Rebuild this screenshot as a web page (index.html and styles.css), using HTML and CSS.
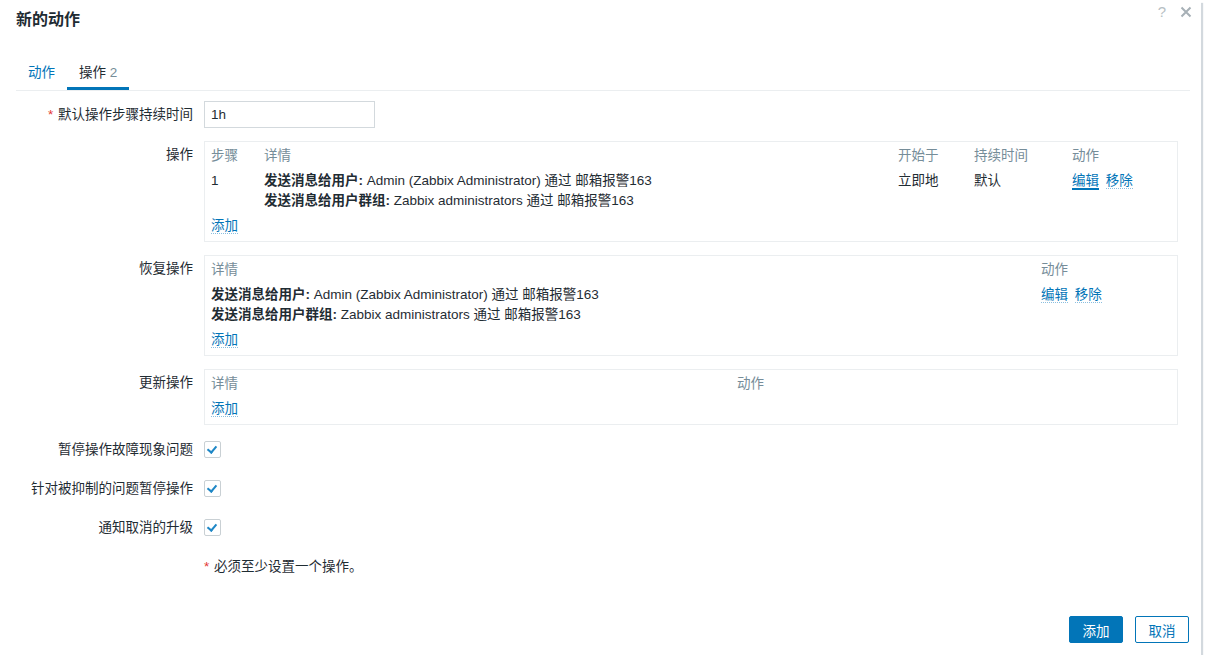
FILE: index.html
```html
<!DOCTYPE html>
<html lang="zh">

<head>
    <meta charset="UTF-8">
    <title>新的动作</title>
    <link rel="stylesheet" href="styles.css">
</head>

<body>
    <div class="dialogue">
        <div class="dialogue-head">
            <h4>新的动作</h4>
            <div class="head-tools">
                <span class="btn-help">?</span>
                <svg class="btn-close" width="12" height="12" viewBox="0 0 12 12">
                    <path d="M1.5 1.5 L10.5 10.5 M10.5 1.5 L1.5 10.5" stroke="#a7b0b6" stroke-width="2" fill="none" />
                </svg>
            </div>
        </div>

        <ul class="tabs">
            <li class="tab"><a href="#">动作</a></li>
            <li class="tab active"><a href="#">操作 <span class="count">2</span></a></li>
        </ul>

        <div class="form">
            <div class="form-row">
                <label class="form-label"><span class="required">*</span> 默认操作步骤持续时间</label>
                <div class="form-field">
                    <input type="text" class="text-input" value="1h">
                </div>
            </div>

            <div class="form-row">
                <label class="form-label">操作</label>
                <div class="form-field">
                    <div class="table-box">
                        <table class="list">
                            <colgroup>
                                <col style="width: 53px">
                                <col style="width: 634px">
                                <col style="width: 76px">
                                <col style="width: 98px">
                                <col>
                            </colgroup>
                            <tr>
                                <th>步骤</th>
                                <th>详情</th>
                                <th>开始于</th>
                                <th>持续时间</th>
                                <th>动作</th>
                            </tr>
                            <tr>
                                <td>1</td>
                                <td>
                                    <b>发送消息给用户:</b> Admin (Zabbix Administrator) 通过 邮箱报警163<br>
                                    <b>发送消息给用户群组:</b> Zabbix administrators 通过 邮箱报警163
                                </td>
                                <td>立即地</td>
                                <td>默认</td>
                                <td><a href="#" class="link focus">编辑</a> <a href="#" class="link">移除</a></td>
                            </tr>
                            <tr>
                                <td colspan="5" class="add-cell"><a href="#" class="link">添加</a></td>
                            </tr>
                        </table>
                    </div>
                </div>
            </div>

            <div class="form-row">
                <label class="form-label">恢复操作</label>
                <div class="form-field">
                    <div class="table-box">
                        <table class="list">
                            <colgroup>
                                <col style="width: 830px">
                                <col>
                            </colgroup>
                            <tr>
                                <th>详情</th>
                                <th>动作</th>
                            </tr>
                            <tr>
                                <td>
                                    <b>发送消息给用户:</b> Admin (Zabbix Administrator) 通过 邮箱报警163<br>
                                    <b>发送消息给用户群组:</b> Zabbix administrators 通过 邮箱报警163
                                </td>
                                <td><a href="#" class="link">编辑</a> <a href="#" class="link">移除</a></td>
                            </tr>
                            <tr>
                                <td colspan="2" class="add-cell"><a href="#" class="link">添加</a></td>
                            </tr>
                        </table>
                    </div>
                </div>
            </div>

            <div class="form-row">
                <label class="form-label">更新操作</label>
                <div class="form-field">
                    <div class="table-box">
                        <table class="list">
                            <colgroup>
                                <col style="width: 526px">
                                <col>
                            </colgroup>
                            <tr>
                                <th>详情</th>
                                <th>动作</th>
                            </tr>
                            <tr>
                                <td colspan="2" class="add-cell"><a href="#" class="link">添加</a></td>
                            </tr>
                        </table>
                    </div>
                </div>
            </div>

            <div class="form-row check-row first-check">
                <label class="form-label">暂停操作故障现象问题</label>
                <div class="form-field"><span class="checkbox checked"></span></div>
            </div>
            <div class="form-row check-row">
                <label class="form-label">针对被抑制的问题暂停操作</label>
                <div class="form-field"><span class="checkbox checked"></span></div>
            </div>
            <div class="form-row check-row">
                <label class="form-label">通知取消的升级</label>
                <div class="form-field"><span class="checkbox checked"></span></div>
            </div>

            <div class="form-row note-row">
                <label class="form-label"></label>
                <div class="form-field"><span class="required">*</span> 必须至少设置一个操作。</div>
            </div>
        </div>

        <div class="dialogue-foot">
            <button class="btn-primary">添加</button>
            <button class="btn-alt">取消</button>
        </div>
    </div>
</body>

</html>
```

FILE: styles.css
```css
body {
    margin: 0;
    background-color: #fff;
    font-family: "Liberation Sans", Arial, "Noto Sans CJK SC", sans-serif;
    font-size: 13.5px;
    color: #1f2c33;
}

.dialogue {
    display: flex;
    flex-direction: column;
    width: 1201px;
    height: 655px;
    background: #fff;
    box-shadow: 2px 3px 1px #d3d9de;
}

.dialogue-head {
    display: flex;
    justify-content: space-between;
    padding: 10px 16px 0;
}

.dialogue-head h4 {
    margin: 0;
    font-size: 16px;
    line-height: 20px;
    font-weight: bold;
    color: #1f2c33;
}

.head-tools {
    display: flex;
    align-items: flex-start;
    margin-top: -8px;
    margin-right: -7px;
}

.btn-help {
    font-size: 15px;
    line-height: 20px;
    color: #b7bfc4;
    margin-right: 14px;
}

.btn-close {
    margin-top: 4px;
}

.tabs {
    display: flex;
    list-style: none;
    margin: 25px 11px 0 16px;
    padding: 0;
    border-bottom: 1px solid #ebeef0;
}

.tab {
    padding: 7px 12px 4px;
    line-height: 21px;
    border-bottom: 3px solid transparent;
}

.tab a {
    color: #0275b8;
    text-decoration: none;
}

.tab.active {
    border-bottom-color: #0275b8;
}

.tab.active a {
    color: #1f2c33;
}

.count {
    color: #768d99;
}

.form {
    padding: 10px 0 0 16px;
}

.form-row {
    display: flex;
    margin-bottom: 13px;
}

.form-label {
    width: 177px;
    flex: none;
    text-align: right;
    line-height: 27px;
    padding-right: 11px;
}

.required {
    color: #e33734;
    margin-right: 1px;
}

.text-input {
    box-sizing: border-box;
    width: 171px;
    height: 27px;
    border: 1px solid #d3d9dd;
    padding: 0 6px;
    font-family: inherit;
    font-size: 13.5px;
    color: #1f2c33;
}

.table-box {
    box-sizing: border-box;
    width: 974px;
    border: 1px solid #ebeef0;
}

.list {
    width: 100%;
    table-layout: fixed;
    border-collapse: collapse;
}

.list th {
    text-align: left;
    font-weight: normal;
    color: #768d99;
    line-height: 20px;
    padding: 4px 6px 2px;
}

.list td {
    line-height: 20px;
    padding: 3px 6px 2px;
    vertical-align: top;
}

.list td.add-cell {
    padding: 3px 6px 5px;
}

.link {
    color: #0275b8;
    text-decoration: none;
    border-bottom: 1px dotted #8cbfdf;
    margin-right: 3px;
}

.link.focus {
    border-bottom: 2px solid #0275b8;
}

.check-row {
    margin-bottom: 12px;
}

.check-row.first-check {
    margin-top: -2px;
}

.check-row .form-field {
    display: flex;
    align-items: center;
}

.checkbox {
    box-sizing: border-box;
    position: relative;
    width: 17px;
    height: 17px;
    border: 1px solid #c9d0d4;
    border-radius: 2px;
}

.checkbox.checked::after {
    content: "";
    position: absolute;
    left: 4px;
    top: 2px;
    width: 4px;
    height: 7px;
    border: solid #1e87c6;
    border-width: 0 2px 2px 0;
    transform: rotate(40deg);
}

.note-row {
    margin-top: 3px;
    line-height: 27px;
}

.dialogue-foot {
    display: flex;
    justify-content: flex-end;
    margin-top: auto;
    padding: 0 12px 12px 0;
}

.dialogue-foot button {
    height: 27px;
    width: 54px;
    margin-left: 12px;
    font-family: inherit;
    font-size: 13.5px;
    border-radius: 2px;
    cursor: pointer;
}

.btn-primary {
    background-color: #0275b8;
    border: 1px solid #0275b8;
    color: #fff;
}

.btn-alt {
    background-color: #fff;
    border: 1px solid #0275b8;
    color: #0275b8;
}
```
